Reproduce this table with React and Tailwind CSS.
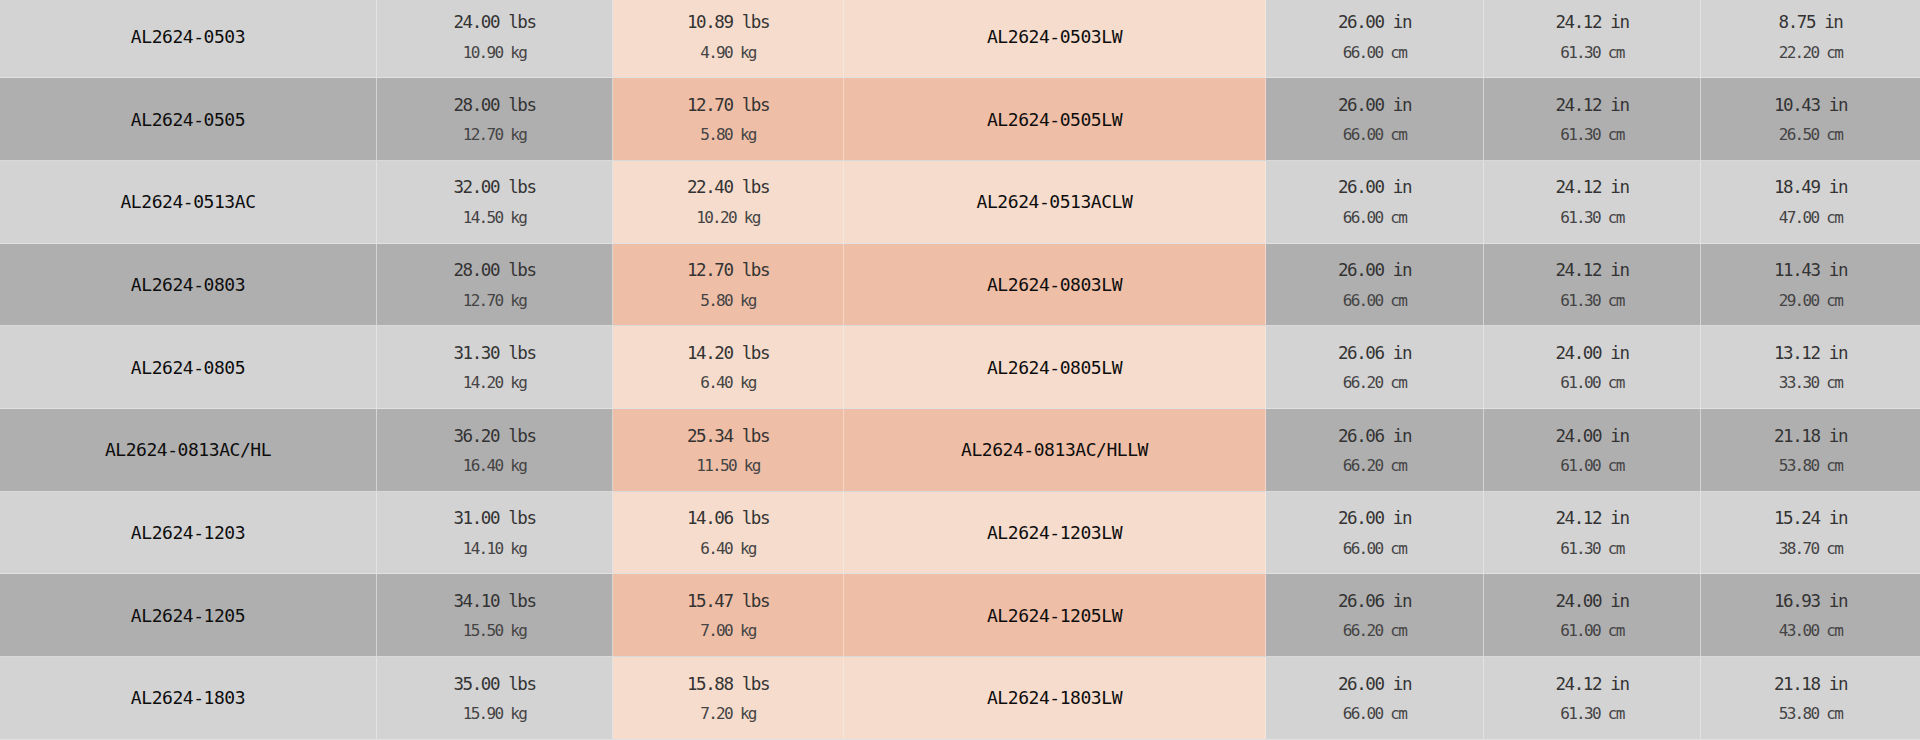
import React from 'react';

const rows = [
  ['AL2624-0503', ['24.00', '10.90'], ['10.89', '4.90'], 'AL2624-0503LW', ['26.00', '66.00'], ['24.12', '61.30'], ['8.75', '22.20']],
  ['AL2624-0505', ['28.00', '12.70'], ['12.70', '5.80'], 'AL2624-0505LW', ['26.00', '66.00'], ['24.12', '61.30'], ['10.43', '26.50']],
  ['AL2624-0513AC', ['32.00', '14.50'], ['22.40', '10.20'], 'AL2624-0513ACLW', ['26.00', '66.00'], ['24.12', '61.30'], ['18.49', '47.00']],
  ['AL2624-0803', ['28.00', '12.70'], ['12.70', '5.80'], 'AL2624-0803LW', ['26.00', '66.00'], ['24.12', '61.30'], ['11.43', '29.00']],
  ['AL2624-0805', ['31.30', '14.20'], ['14.20', '6.40'], 'AL2624-0805LW', ['26.06', '66.20'], ['24.00', '61.00'], ['13.12', '33.30']],
  ['AL2624-0813AC/HL', ['36.20', '16.40'], ['25.34', '11.50'], 'AL2624-0813AC/HLLW', ['26.06', '66.20'], ['24.00', '61.00'], ['21.18', '53.80']],
  ['AL2624-1203', ['31.00', '14.10'], ['14.06', '6.40'], 'AL2624-1203LW', ['26.00', '66.00'], ['24.12', '61.30'], ['15.24', '38.70']],
  ['AL2624-1205', ['34.10', '15.50'], ['15.47', '7.00'], 'AL2624-1205LW', ['26.06', '66.20'], ['24.00', '61.00'], ['16.93', '43.00']],
  ['AL2624-1803', ['35.00', '15.90'], ['15.88', '7.20'], 'AL2624-1803LW', ['26.00', '66.00'], ['24.12', '61.30'], ['21.18', '53.80']],
];

// value on top, metric conversion below
const Dual = ({ value, unit, alt, altUnit }) => (
  <div className="mt-[2px] flex flex-col items-center gap-[13px] leading-none">
    <span className="text-[17.5px] tracking-[-1.4px] text-[#333]">{value} {unit}</span>
    <span className="text-[16px] tracking-[-1.7px] text-[#444]">{alt} {altUnit}</span>
  </div>
);

const Cell = ({ className, children }) => (
  <div className={`flex items-center justify-center border-r last:border-r-0 ${className}`}>
    {children}
  </div>
);

const Model = ({ children }) => (
  <span className="text-[18px] tracking-[-0.45px] text-[#0d0d0d]">{children}</span>
);

export default function App() {
  return (
    <div className="h-[740px] w-[1920px] overflow-hidden bg-[#d4d3d4]" style={{ fontFamily: '"DejaVu Sans Mono", monospace' }}>
      <div className="-mt-[4.5px]">
        {rows.map((r, i) => {
          const odd = i % 2 === 1;
          const gray = odd ? 'bg-[#b0afb0] border-[#d6d5d6]' : 'bg-[#d4d3d4] border-[#e4e3e4]';
          const peach = odd ? 'bg-[#efbea7] border-[#f3d7ca]' : 'bg-[#f6dccd] border-[#f8e6dc]';
          const line = odd ? 'border-b-[#dad9da]' : 'border-b-[#e2e1e2]';
          return (
            <div
              key={r[0]}
              className={`grid h-[82.7px] grid-cols-[377px_236px_231px_422px_218px_217px_219px] border-b ${line}`}
            >
              <Cell className={gray}><Model>{r[0]}</Model></Cell>
              <Cell className={gray}>
                <Dual value={r[1][0]} unit="lbs" alt={r[1][1]} altUnit="kg" />
              </Cell>
              <Cell className={peach}>
                <Dual value={r[2][0]} unit="lbs" alt={r[2][1]} altUnit="kg" />
              </Cell>
              <Cell className={peach}><Model>{r[3]}</Model></Cell>
              <Cell className={gray}>
                <Dual value={r[4][0]} unit="in" alt={r[4][1]} altUnit="cm" />
              </Cell>
              <Cell className={gray}>
                <Dual value={r[5][0]} unit="in" alt={r[5][1]} altUnit="cm" />
              </Cell>
              <Cell className={gray}>
                <Dual value={r[6][0]} unit="in" alt={r[6][1]} altUnit="cm" />
              </Cell>
            </div>
          );
        })}
      </div>
    </div>
  );
}
